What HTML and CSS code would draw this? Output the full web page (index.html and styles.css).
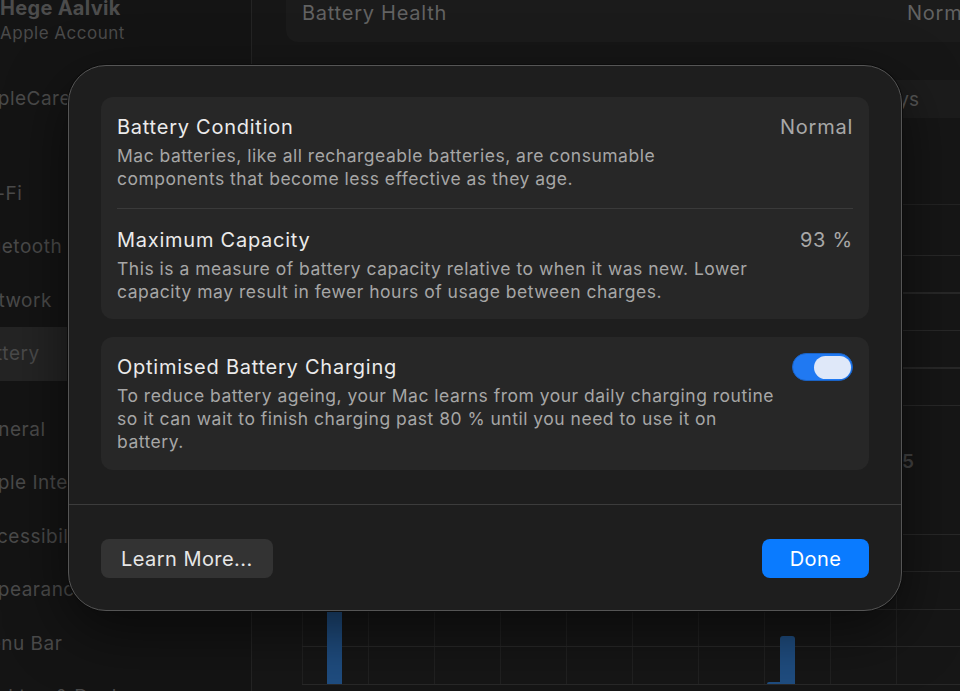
FILE: index.html
```html
<!DOCTYPE html>
<html lang="en">
<head>
    <meta charset="UTF-8">
    <meta name="viewport" content="width=device-width, initial-scale=1.0">
    <title>Battery Health</title>
    <link rel="stylesheet" href="styles.css">
</head>
<body>
    <div class="window">
        <aside class="sidebar">
            <div class="account">
                <div class="account-name">Hege Aalvik</div>
                <div class="account-sub">Apple Account</div>
            </div>
            <div class="nav-item applecare">AppleCare</div>
            <ul class="nav-group">
                <li class="nav-item">Wi-Fi</li>
                <li class="nav-item">Bluetooth</li>
                <li class="nav-item">Network</li>
                <li class="nav-item selected">Battery</li>
            </ul>
            <ul class="nav-group second">
                <li class="nav-item">General</li>
                <li class="nav-item">Apple Intelligence</li>
                <li class="nav-item">Accessibility</li>
                <li class="nav-item">Appearance</li>
                <li class="nav-item">Menu Bar</li>
                <li class="nav-item">Desktop &amp; Dock</li>
            </ul>
        </aside>

        <main class="pane">
            <div class="health-card">
                <span>Battery Health</span>
                <span>Normal</span>
            </div>
            <div class="range-bar">
                <span>Last 24 Hours</span>
                <span>Last 10 Days</span>
            </div>
            <div class="chart level">
                <div class="plot"></div>
            </div>
            <div class="axis-label">15</div>
            <div class="chart usage">
                <div class="plot">
                    <div class="bar" style="left: 25px; height: 90px;"></div>
                    <div class="bar" style="left: 465px; height: 2px;"></div>
                    <div class="bar" style="left: 478px; height: 48px;"></div>
                </div>
            </div>
        </main>
    </div>

    <div class="dialog">
        <div class="dialog-body">
            <div class="group">
                <div class="row">
                    <div class="row-text">
                        <div class="row-title">Battery Condition</div>
                        <div class="row-desc">Mac batteries, like all rechargeable batteries, are consumable<br>components that become less effective as they age.</div>
                    </div>
                    <div class="row-value">Normal</div>
                </div>
                <div class="row">
                    <div class="row-text">
                        <div class="row-title">Maximum Capacity</div>
                        <div class="row-desc">This is a measure of battery capacity relative to when it was new. Lower<br>capacity may result in fewer hours of usage between charges.</div>
                    </div>
                    <div class="row-value">93 %</div>
                </div>
            </div>

            <div class="group">
                <div class="row">
                    <div class="row-text">
                        <div class="row-title">Optimised Battery Charging</div>
                        <div class="row-desc">To reduce battery ageing, your Mac learns from your daily charging routine<br>so it can wait to finish charging past 80 % until you need to use it on<br>battery.</div>
                    </div>
                    <div class="toggle on"><div class="knob"></div></div>
                </div>
            </div>
        </div>
        <div class="dialog-footer">
            <button class="btn">Learn More...</button>
            <button class="btn primary">Done</button>
        </div>
    </div>
</body>
</html>
```

FILE: styles.css
```css
body {
    font-family: Inter, "Noto Sans", sans-serif;
    margin: 0;
    padding: 0;
    width: 960px;
    height: 691px;
    overflow: hidden;
    background-color: #161616;
    position: relative;
}
.window {
    display: grid;
    grid-template-columns: 252px 1fr;
    height: 691px;
}

/* Sidebar (dimmed behind the sheet) */
.sidebar {
    background-color: #141414;
    border-right: 1px solid #242424;
    overflow: hidden;
    color: #4a4a4a;
}
.account {
    margin-top: -5px;
}
.account-name {
    font-size: 20px;
    font-weight: 700;
    letter-spacing: 0.3px;
    line-height: 26px;
    color: #4c4c4c;
}
.account-sub {
    font-size: 17px;
    letter-spacing: 0.5px;
    line-height: 24px;
}
.nav-group {
    list-style: none;
    margin: 41px 0 0;
    padding: 0;
}
.nav-group.second {
    margin-top: 22px;
}
.nav-item {
    height: 53.5px;
    line-height: 53.5px;
    font-size: 19px;
    letter-spacing: 0.5px;
    margin-left: -28px;
    white-space: nowrap;
}
.applecare {
    margin-top: 27px;
}
.nav-item.selected {
    background-color: #242424;
    border-radius: 0 8px 8px 0;
}

/* Right pane */
.pane {
    padding-left: 34px;
    overflow: hidden;
}
.health-card {
    display: flex;
    justify-content: space-between;
    align-items: flex-end;
    width: 710px;
    height: 62px;
    margin-top: -20px;
    padding: 0 16px 17px;
    box-sizing: border-box;
    background-color: #1b1b1b;
    border-radius: 12px;
    font-size: 20px;
    letter-spacing: 0.75px;
    color: #626262;
}
.range-bar {
    display: flex;
    justify-content: flex-end;
    gap: 40px;
    height: 38px;
    margin-top: 38px;
    padding-right: 41px;
    background-color: #1c1c1c;
    font-size: 19px;
    line-height: 40px;
    color: #555;
}
.chart {
    margin-left: 16px;
}
.chart .plot {
    position: relative;
    height: 150px;
    border-bottom: 1px solid #282828;
    background-image:
        repeating-linear-gradient(to bottom, #282828 0, #282828 1px, transparent 1px, transparent 37.5px),
        repeating-linear-gradient(to right, #212121 0, #212121 1px, transparent 1px, transparent 66px);
}
.chart.level {
    border-top: 1px solid #232323;
    margin-top: 86px;
    padding-top: 50px;
}
.axis-label {
    height: 128px;
    line-height: 112px;
    text-align: right;
    padding-right: 46px;
    font-size: 19px;
    font-weight: 600;
    color: #444;
}
.bar {
    position: absolute;
    bottom: 0;
    width: 15px;
    background-color: #1f4d80;
    border-radius: 3px 3px 0 0;
}

/* Sheet */
.dialog {
    position: absolute;
    left: 68px;
    top: 65px;
    width: 834px;
    height: 546px;
    box-sizing: border-box;
    background-color: #1e1e1e;
    border: 1px solid #555;
    border-radius: 38px;
    box-shadow: 0 0 0 1px #0c0c0c, 0 20px 60px rgba(0, 0, 0, 0.55);
    overflow: hidden;
}
.dialog-body {
    display: flex;
    flex-direction: column;
    gap: 18px;
    padding: 31px 32px 34px;
}
.group {
    background-color: #272727;
    border-radius: 12px;
    padding: 0 16px;
}
.row {
    display: flex;
    justify-content: space-between;
    align-items: flex-start;
    padding: 18px 0 18px;
}
.row + .row {
    border-top: 1px solid #3a3a3a;
    padding: 19px 0 16px;
}
.group:last-child .row {
    padding: 18px 0 17px;
}
.row-title {
    font-size: 20px;
    letter-spacing: 0.75px;
    line-height: 24px;
    color: #ebebeb;
    margin-bottom: 5px;
}
.row-desc {
    font-size: 17.5px;
    letter-spacing: 0.5px;
    line-height: 23px;
    color: #a6a6a6;
}
.row-value {
    font-size: 20px;
    letter-spacing: 0.75px;
    line-height: 24px;
    color: #a8a8a8;
}
.toggle {
    width: 61px;
    height: 28px;
    margin-top: -2px;
    box-sizing: border-box;
    border-radius: 14px;
    background-color: #2079f2;
    border: 1px solid #1a63c6;
    display: flex;
    justify-content: flex-end;
    align-items: center;
    padding: 0 1px;
}
.knob {
    width: 37px;
    height: 23px;
    border-radius: 12px;
    background-color: #dfe8f9;
}
.dialog-footer {
    display: flex;
    justify-content: space-between;
    border-top: 1px solid #3c3c3c;
    padding: 34px 32px 32px;
}
.btn {
    height: 39px;
    padding: 0 20px;
    border: none;
    border-radius: 8px;
    background-color: #333;
    color: #e6e6e6;
    font-family: inherit;
    font-size: 20px;
    letter-spacing: 0.45px;
    cursor: pointer;
}
.btn.primary {
    width: 107px;
    padding: 0;
    background-color: #0a7bff;
    color: #fff;
}
```
